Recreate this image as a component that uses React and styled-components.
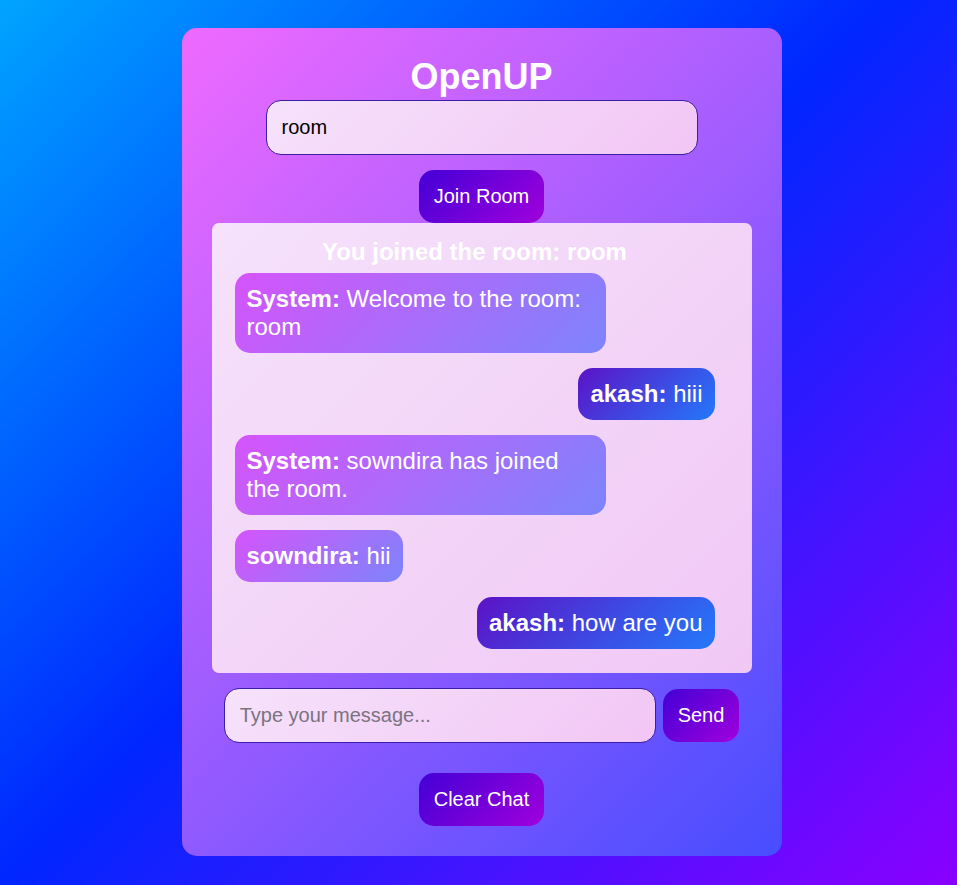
import React, { useState } from "react";
import styled, { createGlobalStyle } from "styled-components";

const GlobalStyle = createGlobalStyle`
  * {
    box-sizing: border-box;
  }

  body {
    margin: 0;
    min-height: 100vh;
    font-family: "Liberation Sans", Arial, sans-serif;
    background: linear-gradient(135deg, #00a4ff 0%, #0026ff 48%, #8a00ff 100%);
    background-attachment: fixed;
  }
`;

const Page = styled.div`
  display: flex;
  justify-content: center;
  align-items: flex-start;
  padding: 28px 0 0 6px;
  min-height: 100vh;
`;

const Card = styled.div`
  width: 600px;
  padding: 28px 30px 30px;
  border-radius: 15px;
  background: linear-gradient(135deg, #ef6aff 0%, #9c5cff 50%, #474dff 100%);
  display: flex;
  flex-direction: column;
  align-items: center;
`;

const Title = styled.h1`
  margin: 0 0 2px;
  font-size: 36px;
  font-weight: bold;
  color: #ffffff;
`;

const TextInput = styled.input`
  width: 432px;
  padding: 15px;
  font-size: 20px;
  font-family: inherit;
  color: #000;
  border: 1px solid #3b1ea6;
  border-radius: 15px;
  background: linear-gradient(135deg, #f6e2fb, #f2c6f5);
  outline: none;

  &::placeholder {
    color: #7a7480;
  }
`;

const Button = styled.button`
  padding: 15px;
  font-size: 20px;
  font-family: inherit;
  color: #ffffff;
  border: none;
  border-radius: 15px;
  cursor: pointer;
  background: linear-gradient(135deg, #4300d6 0%, #a000dc 100%);
  margin-top: ${(p) => p.$top || "0"};
`;

const ChatBox = styled.div`
  width: 540px;
  height: 450px;
  padding: 15px 37px 24px 23px;
  border-radius: 7px;
  background: linear-gradient(135deg, #f5e2fb, #f1c8f5);
  display: flex;
  flex-direction: column;
  gap: 15px;
`;

const RoomNotice = styled.div`
  font-size: 24px;
  font-weight: bold;
  color: #ffffff;
  text-align: center;
  margin-bottom: -8px;
`;

const Bubble = styled.div`
  align-self: ${(p) => (p.$mine ? "flex-end" : "flex-start")};
  max-width: 371px;
  padding: 12px;
  border-radius: 15px;
  font-size: 24px;
  color: #ffffff;
  background: ${(p) =>
    p.$mine
      ? "linear-gradient(135deg, #5c12c6 0%, #2479fb 100%)"
      : "linear-gradient(135deg, #d554fb 0%, #7d84fb 100%)"};
`;

const InputRow = styled.div`
  display: flex;
  gap: 7px;
  align-items: center;
  margin-top: 15px;
`;

const initialMessages = [
  { user: "System", text: "Welcome to the room: room" },
  { user: "akash", text: "hiii", mine: true },
  { user: "System", text: "sowndira has joined the room." },
  { user: "sowndira", text: "hii" },
  { user: "akash", text: "how are you", mine: true },
];

export default function App() {
  const [room, setRoom] = useState("room");
  const [message, setMessage] = useState("");
  const [messages, setMessages] = useState(initialMessages);

  const send = () => {
    if (!message.trim()) return;
    setMessages([...messages, { user: "akash", text: message, mine: true }]);
    setMessage("");
  };

  return (
    <>
      <GlobalStyle />
      <Page>
        <Card>
          <Title>OpenUP</Title>
          <TextInput value={room} onChange={(e) => setRoom(e.target.value)} />
          <Button $top="15px">Join Room</Button>
          <ChatBox>
            <RoomNotice>You joined the room: room</RoomNotice>
            {messages.map((m, i) => (
              <Bubble key={i} $mine={m.mine}>
                <strong>{m.user}:</strong> {m.text}
              </Bubble>
            ))}
          </ChatBox>
          <InputRow>
            <TextInput
              placeholder="Type your message..."
              value={message}
              onChange={(e) => setMessage(e.target.value)}
            />
            <Button onClick={send}>Send</Button>
          </InputRow>
          <Button $top="30px" onClick={() => setMessages([])}>
            Clear Chat
          </Button>
        </Card>
      </Page>
    </>
  );
}
